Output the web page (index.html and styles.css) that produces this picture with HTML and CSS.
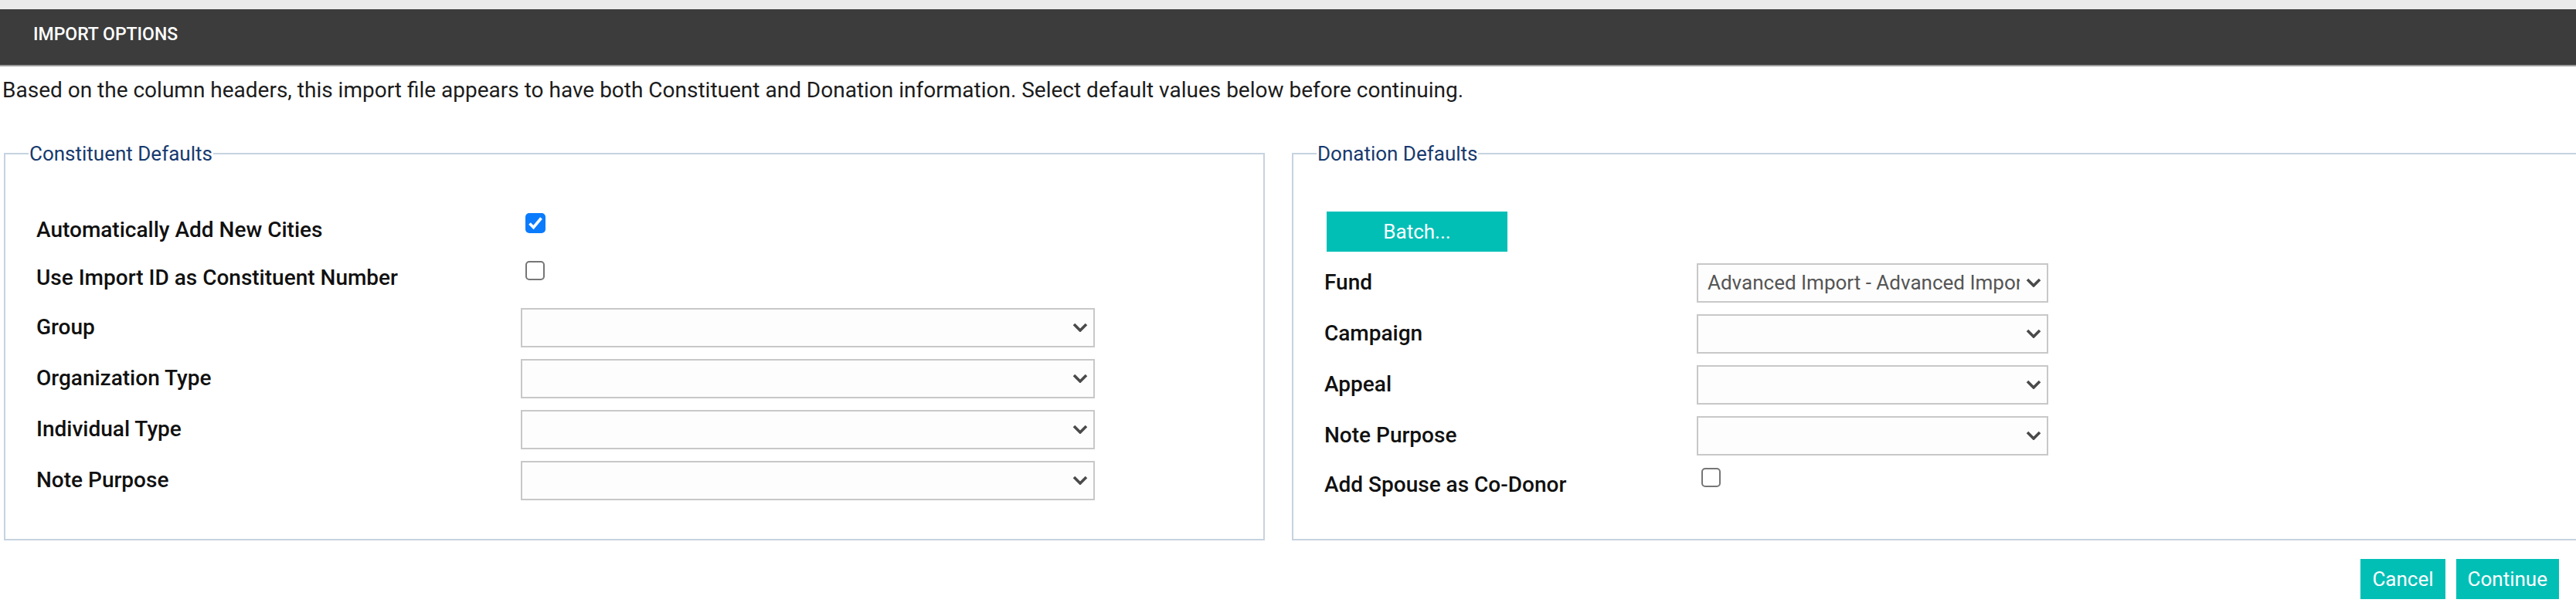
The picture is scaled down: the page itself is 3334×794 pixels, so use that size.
FILE: index.html
```html
<!DOCTYPE html>
<html lang="en">
<head>
<meta charset="utf-8">
<title>Import Options</title>
<link rel="stylesheet" href="styles.css">
</head>
<body>
<div class="topbar"></div>
<header class="titlebar"><h1 class="title">IMPORT OPTIONS</h1></header>
<p class="intro">Based on the column headers, this import file appears to have both Constituent and Donation information. Select default values below before continuing.</p>

<div class="panels">
  <fieldset class="panel panel-constituent">
    <legend class="panel-legend">Constituent Defaults</legend>
    <div class="rows rows-constituent">
      <div class="row row-check">
        <span class="label">Automatically Add New Cities</span>
        <span class="cb cb-on" role="checkbox" aria-checked="true"><svg class="cb-tick" viewBox="0 0 26 26" width="26" height="26"><path d="M5.5 13.5 L10.5 18.5 L20.5 6.5" fill="none" stroke="#fff" stroke-width="3.6" stroke-linejoin="miter" stroke-linecap="butt"/></svg></span>
      </div>
      <div class="row row-check">
        <span class="label">Use Import ID as Constituent Number</span>
        <span class="cb" role="checkbox" aria-checked="false"></span>
      </div>
      <div class="row row-select">
        <span class="label">Group</span>
        <div class="sel"><select class="sel-input"><option></option></select><svg class="chev" viewBox="0 0 20 12" width="20" height="12"><path d="M2 2 L10 10 L18 2" fill="none" stroke="#4a4a4a" stroke-width="3.6"/></svg></div>
      </div>
      <div class="row row-select">
        <span class="label">Organization Type</span>
        <div class="sel"><select class="sel-input"><option></option></select><svg class="chev" viewBox="0 0 20 12" width="20" height="12"><path d="M2 2 L10 10 L18 2" fill="none" stroke="#4a4a4a" stroke-width="3.6"/></svg></div>
      </div>
      <div class="row row-select">
        <span class="label">Individual Type</span>
        <div class="sel"><select class="sel-input"><option></option></select><svg class="chev" viewBox="0 0 20 12" width="20" height="12"><path d="M2 2 L10 10 L18 2" fill="none" stroke="#4a4a4a" stroke-width="3.6"/></svg></div>
      </div>
      <div class="row row-select">
        <span class="label">Note Purpose</span>
        <div class="sel"><select class="sel-input"><option></option></select><svg class="chev" viewBox="0 0 20 12" width="20" height="12"><path d="M2 2 L10 10 L18 2" fill="none" stroke="#4a4a4a" stroke-width="3.6"/></svg></div>
      </div>
    </div>
  </fieldset>

  <fieldset class="panel panel-donation">
    <legend class="panel-legend">Donation Defaults</legend>
    <div class="rows rows-donation">
      <div class="batch-row"><button class="btn btn-batch" type="button">Batch...</button></div>
      <div class="row row-select">
        <span class="label">Fund</span>
        <div class="sel"><select class="sel-input sel-filled"><option>Advanced Import - Advanced Import</option></select><svg class="chev" viewBox="0 0 20 12" width="20" height="12"><path d="M2 2 L10 10 L18 2" fill="none" stroke="#4a4a4a" stroke-width="3.6"/></svg></div>
      </div>
      <div class="row row-select">
        <span class="label">Campaign</span>
        <div class="sel"><select class="sel-input"><option></option></select><svg class="chev" viewBox="0 0 20 12" width="20" height="12"><path d="M2 2 L10 10 L18 2" fill="none" stroke="#4a4a4a" stroke-width="3.6"/></svg></div>
      </div>
      <div class="row row-select">
        <span class="label">Appeal</span>
        <div class="sel"><select class="sel-input"><option></option></select><svg class="chev" viewBox="0 0 20 12" width="20" height="12"><path d="M2 2 L10 10 L18 2" fill="none" stroke="#4a4a4a" stroke-width="3.6"/></svg></div>
      </div>
      <div class="row row-select">
        <span class="label">Note Purpose</span>
        <div class="sel"><select class="sel-input"><option></option></select><svg class="chev" viewBox="0 0 20 12" width="20" height="12"><path d="M2 2 L10 10 L18 2" fill="none" stroke="#4a4a4a" stroke-width="3.6"/></svg></div>
      </div>
      <div class="row row-check">
        <span class="label">Add Spouse as Co-Donor</span>
        <span class="cb" role="checkbox" aria-checked="false"></span>
      </div>
    </div>
  </fieldset>
</div>

<div class="actions">
  <button class="btn btn-action" type="button">Cancel</button>
  <button class="btn btn-action" type="button">Continue</button>
</div>
</body>
</html>
```

FILE: styles.css
```css
html, body {
  margin: 0;
  padding: 0;
  background: #ffffff;
  overflow: hidden;
}

body {
  font-family: Roboto, "Liberation Sans", Arial, sans-serif;
  color: #1a1a1a;
  width: 3334px;
}

.topbar {
  height: 12px;
  background: #ebebeb;
}

.titlebar {
  height: 74px;
  box-sizing: border-box;
  background: #3c3c3c;
  border-bottom: 2px solid #9a9a9a;
  display: flex;
  align-items: center;
  padding: 0 0 6px 43px;
}

.title {
  margin: 0;
  font-size: 23px;
  font-weight: 500;
  color: #ffffff;
  line-height: 28px;
}

.intro {
  margin: 14px 0 0 3px;
  font-size: 28px;
  line-height: 33px;
  color: #1c1c1c;
}

.panels {
  display: flex;
  gap: 35px;
  margin-top: 51px;
  padding-left: 5px;
}

.panel {
  margin: 0;
  box-sizing: border-box;
  border: 2px solid #c6d3e0;
  padding: 53px 0 39px 30px;
  min-width: 0;
  flex-shrink: 0;
}

.panel-constituent {
  width: 1632px;
}

.panel-donation {
  width: 1720px;
}

.panel-legend {
  padding: 0 1px;
  font-size: 26px;
  line-height: 30px;
  color: #173a6e;
}

.rows {
  margin-left: 10px;
  display: flex;
  flex-direction: column;
}

.row {
  display: grid;
  align-items: center;
}

.rows-constituent .row {
  grid-template-columns: 627px 743px;
}

.rows-donation .row {
  grid-template-columns: 482px 455px;
}

.row-check {
  height: 62px;
}

.row-select {
  height: 66px;
}

.label {
  font-size: 28px;
  font-weight: 500;
  line-height: 32px;
  color: #111111;
  white-space: nowrap;
}

.cb {
  align-self: start;
  margin-top: 9px;
  margin-left: 6px;
  width: 25px;
  height: 25px;
  box-sizing: border-box;
  border: 2px solid #767676;
  border-radius: 5px;
  background: #ffffff;
  display: block;
}

.cb-on {
  width: 26px;
  height: 26px;
  border: none;
  background: #0b7bfe;
}

.cb-tick {
  display: block;
}

.sel {
  position: relative;
  height: 51px;
}

.sel-input {
  -webkit-appearance: none;
  appearance: none;
  width: 100%;
  height: 51px;
  box-sizing: border-box;
  border: 2px solid #c8c8c8;
  border-radius: 0;
  background: #fdfdfd;
  padding: 0 38px 0 12px;
  font-family: Roboto, "Liberation Sans", Arial, sans-serif;
  font-size: 26px;
  color: #555555;
  outline: none;
}

.sel-filled {
  padding-right: 35px;
}

.chev {
  position: absolute;
  right: 9px;
  top: 50%;
  transform: translateY(-50%);
  pointer-events: none;
}

.batch-row {
  padding: 7px 0 7px 3px;
}

.btn {
  font-family: Roboto, "Liberation Sans", Arial, sans-serif;
  font-size: 26px;
  color: #ffffff;
  background: #02bfb6;
  border: none;
  border-radius: 0;
  height: 52px;
  cursor: pointer;
}

.btn-batch {
  width: 234px;
  display: block;
}

.actions {
  display: flex;
  justify-content: flex-end;
  gap: 14px;
  margin-top: 24px;
  padding-right: 22px;
}

.btn-action {
  padding: 0 15px;
}
```
